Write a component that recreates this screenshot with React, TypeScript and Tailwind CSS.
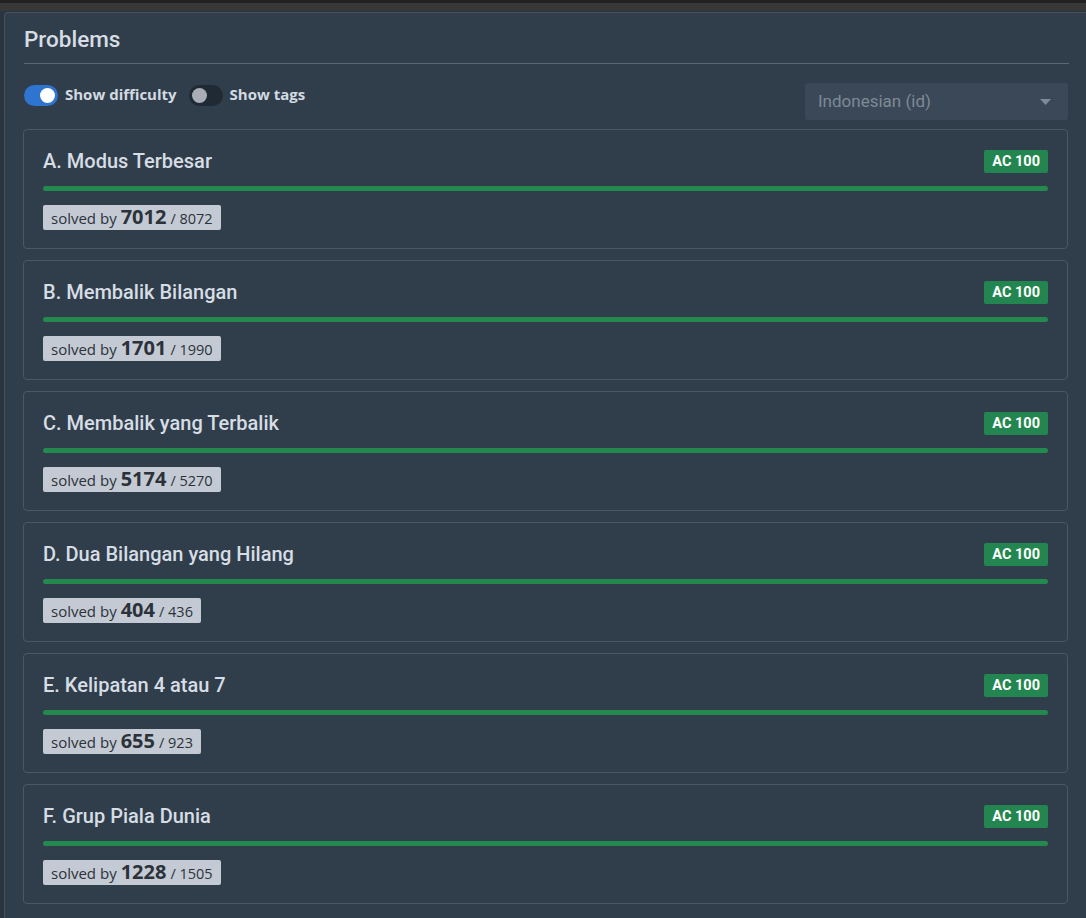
const problems = [
  { id: "A", name: "Modus Terbesar", solved: 7012, total: 8072 },
  { id: "B", name: "Membalik Bilangan", solved: 1701, total: 1990 },
  { id: "C", name: "Membalik yang Terbalik", solved: 5174, total: 5270 },
  { id: "D", name: "Dua Bilangan yang Hilang", solved: 404, total: 436 },
  { id: "E", name: "Kelipatan 4 atau 7", solved: 655, total: 923 },
  { id: "F", name: "Grup Piala Dunia", solved: 1228, total: 1505 },
];

function Toggle({ on, label }: { on: boolean; label: string }) {
  return (
    <div className="flex items-center gap-[7px]">
      <div
        className={`flex h-[21px] w-[34px] items-center rounded-full px-[3px] ${
          on ? "justify-end bg-[#2f74d0]" : "justify-start bg-[#1f2a34]"
        }`}
      >
        <div className={`h-[15px] w-[15px] rounded-full ${on ? "bg-white" : "bg-[#a9adb6]"}`} />
      </div>
      <span className="mt-[-2px] text-[15px] font-bold text-[#d3dae1] [font-family:'Open_Sans',sans-serif]">{label}</span>
    </div>
  );
}

export default function App() {
  return (
    <div className="flex h-[918px] w-[1086px] flex-col overflow-hidden bg-[#2a3540]">
      <div className="h-[3px] bg-[#222222]" />
      <div className="h-[8px] bg-[#383838]" />
      <div className="ml-[4px] mt-[1px] flex-1 rounded-tl-[4px] border-l border-t border-[#44525f] bg-[#303e4b] px-[19px] pt-[13px]">
        <h2 className="pb-[11px] text-[22.5px] font-medium leading-[26px] text-[#d6dde4] [font-family:Roboto,sans-serif]">
          Problems
        </h2>
        <div className="mr-[-2px] h-px bg-[#5b6875]" />
        <div className="mt-[19px] flex items-start justify-between">
          <div className="mt-[2px] flex items-center gap-[12px]">
            <Toggle on label="Show difficulty" />
            <Toggle on={false} label="Show tags" />
          </div>
          <div className="mr-[-1px] flex h-[37px] w-[263px] items-center justify-between rounded-[3px] bg-[#3a4857] pl-[13px] pr-[17px] text-[17px] text-[#7e8a96] [font-family:Roboto,sans-serif]">
            <span>Indonesian (id)</span>
            <svg width="11" height="6" viewBox="0 0 11 6">
              <path d="M0 0h11L5.5 6z" fill="#7e8a96" />
            </svg>
          </div>
        </div>
        <div className="mx-[-1px] mt-[9px] flex flex-col gap-[11px]">
          {problems.map((p) => (
            <div
              key={p.id}
              className="flex h-[120px] flex-col rounded-[4px] border border-[#4a5764] bg-[#303e4b] px-[19px] pt-[19px]"
            >
              <div className="flex h-[24px] items-center justify-between">
                <span className="text-[20px] font-medium leading-[24px] text-[#d6dde4] [font-family:Roboto,sans-serif]">
                  {p.id}. {p.name}
                </span>
                <span className="mt-[1px] rounded-[2px] bg-[#238650] px-[8px] py-[2px] text-[14.5px] font-bold leading-[19px] text-white [font-family:Roboto,sans-serif]">
                  AC 100
                </span>
              </div>
              <div className="mt-[13px] h-[5px] rounded-full bg-[#23894f]" />
              <div className="mt-[14px] flex">
                <div className="flex h-[25px] items-baseline rounded-[2px] bg-[#c4cad3] px-[8px] text-[#2b323a] [font-family:'Open_Sans',sans-serif]">
                  <span className="text-[15px] leading-[24px]">solved by</span>
                  <span className="ml-[4px] text-[20px] font-bold leading-[24px]">{p.solved}</span>
                  <span className="ml-[4px] text-[14.5px] leading-[24px]">/ {p.total}</span>
                </div>
              </div>
            </div>
          ))}
        </div>
      </div>
    </div>
  );
}
